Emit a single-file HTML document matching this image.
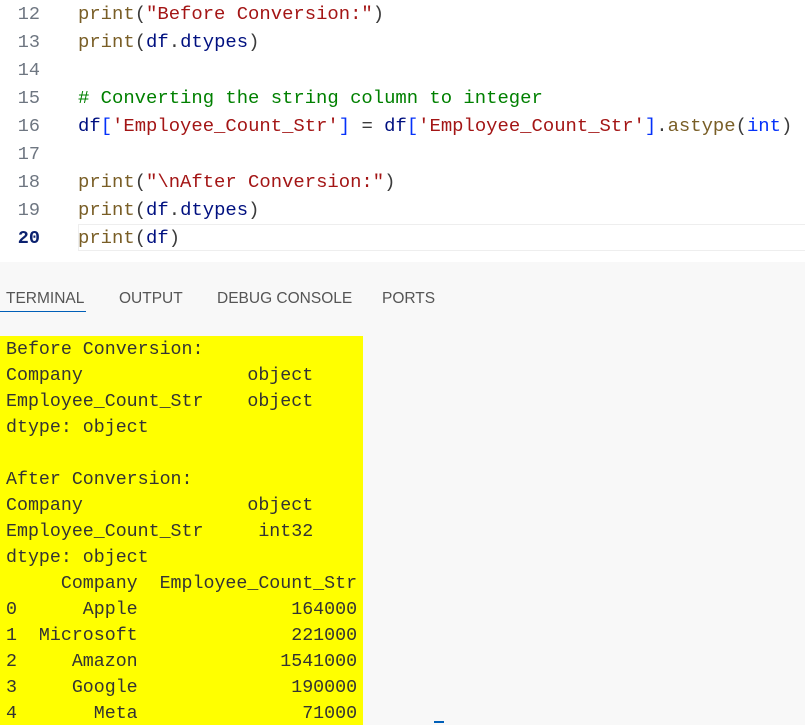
<!DOCTYPE html>
<html><head><style>
body{margin:0;width:805px;height:725px;overflow:hidden;background:#f8f8f8;font-family:"Liberation Mono",monospace}
.ed{position:absolute;left:0;top:0;width:805px;height:262px;background:#fff}
.ln{position:absolute;left:0;width:40px;text-align:right;color:#6e7681;font-size:18.5px}
.cd{position:absolute;left:78px;font-size:18.9px;white-space:pre;color:#3b3b3b}
.s{color:#a31515}.c{color:#008000}.b{color:#0431fa}.f{color:#795e26}.v{color:#001080}
.tabs{position:absolute;top:290px;font-family:"Liberation Sans",sans-serif;font-size:15.5px;color:#555}
.term{position:absolute;left:0;top:336px;width:363px;height:389px;background:#ffff00}
.t{position:absolute;left:6px;font-size:18.3px;white-space:pre;color:#333}
</style></head><body>
<div class="ed">
<div style="position:absolute;left:78px;top:224px;width:727px;height:25px;border:1px solid #eee;border-right:none"></div>
</div>
<div style="position:absolute;top:3px;left:0">
<div class="ln" style="top:1px">12</div><div class="cd" style="top:0"><span class="f">print</span>(<span class="s">"Before Conversion:"</span>)</div>
<div class="ln" style="top:29px">13</div><div class="cd" style="top:28px"><span class="f">print</span>(<span class="v">df</span>.<span class="v">dtypes</span>)</div>
<div class="ln" style="top:57px">14</div>
<div class="ln" style="top:85px">15</div><div class="cd c" style="top:84px"># Converting the string column to integer</div>
<div class="ln" style="top:113px">16</div><div class="cd" style="top:112px"><span class="v">df</span><span class="b">[</span><span class="s">'Employee_Count_Str'</span><span class="b">]</span> = <span class="v">df</span><span class="b">[</span><span class="s">'Employee_Count_Str'</span><span class="b">]</span>.<span class="f">astype</span>(<span class="b">int</span>)</div>
<div class="ln" style="top:141px">17</div>
<div class="ln" style="top:169px">18</div><div class="cd" style="top:168px"><span class="f">print</span>(<span class="s">"\nAfter Conversion:"</span>)</div>
<div class="ln" style="top:197px">19</div><div class="cd" style="top:196px"><span class="f">print</span>(<span class="v">df</span>.<span class="v">dtypes</span>)</div>
<div class="ln" style="top:225px;color:#0b216f;font-weight:bold">20</div><div class="cd" style="top:224px"><span class="f">print</span>(<span class="v">df</span>)</div>
</div>
<div class="tabs" style="left:6px">TERMINAL</div>
<div style="position:absolute;left:0;top:311px;width:86px;height:1px;background:#005fb8"></div>
<div class="tabs" style="left:119px">OUTPUT</div>
<div class="tabs" style="left:217px">DEBUG CONSOLE</div>
<div class="tabs" style="left:382px">PORTS</div>
<div class="term"></div>
<div style="position:absolute;top:340px">
<div class="t" style="top:0">Before Conversion:</div>
<div class="t" style="top:26px">Company               object</div>
<div class="t" style="top:52px">Employee_Count_Str    object</div>
<div class="t" style="top:78px">dtype: object</div>
<div class="t" style="top:130px">After Conversion:</div>
<div class="t" style="top:156px">Company               object</div>
<div class="t" style="top:182px">Employee_Count_Str     int32</div>
<div class="t" style="top:208px">dtype: object</div>
<div class="t" style="top:234px">     Company  Employee_Count_Str</div>
<div class="t" style="top:260px">0      Apple              164000</div>
<div class="t" style="top:286px">1  Microsoft              221000</div>
<div class="t" style="top:312px">2     Amazon             1541000</div>
<div class="t" style="top:338px">3     Google              190000</div>
<div class="t" style="top:364px">4       Meta               71000</div>
</div>
<div style="position:absolute;left:434px;top:721px;width:10px;height:2px;background:#005fb8"></div>
</body></html>
